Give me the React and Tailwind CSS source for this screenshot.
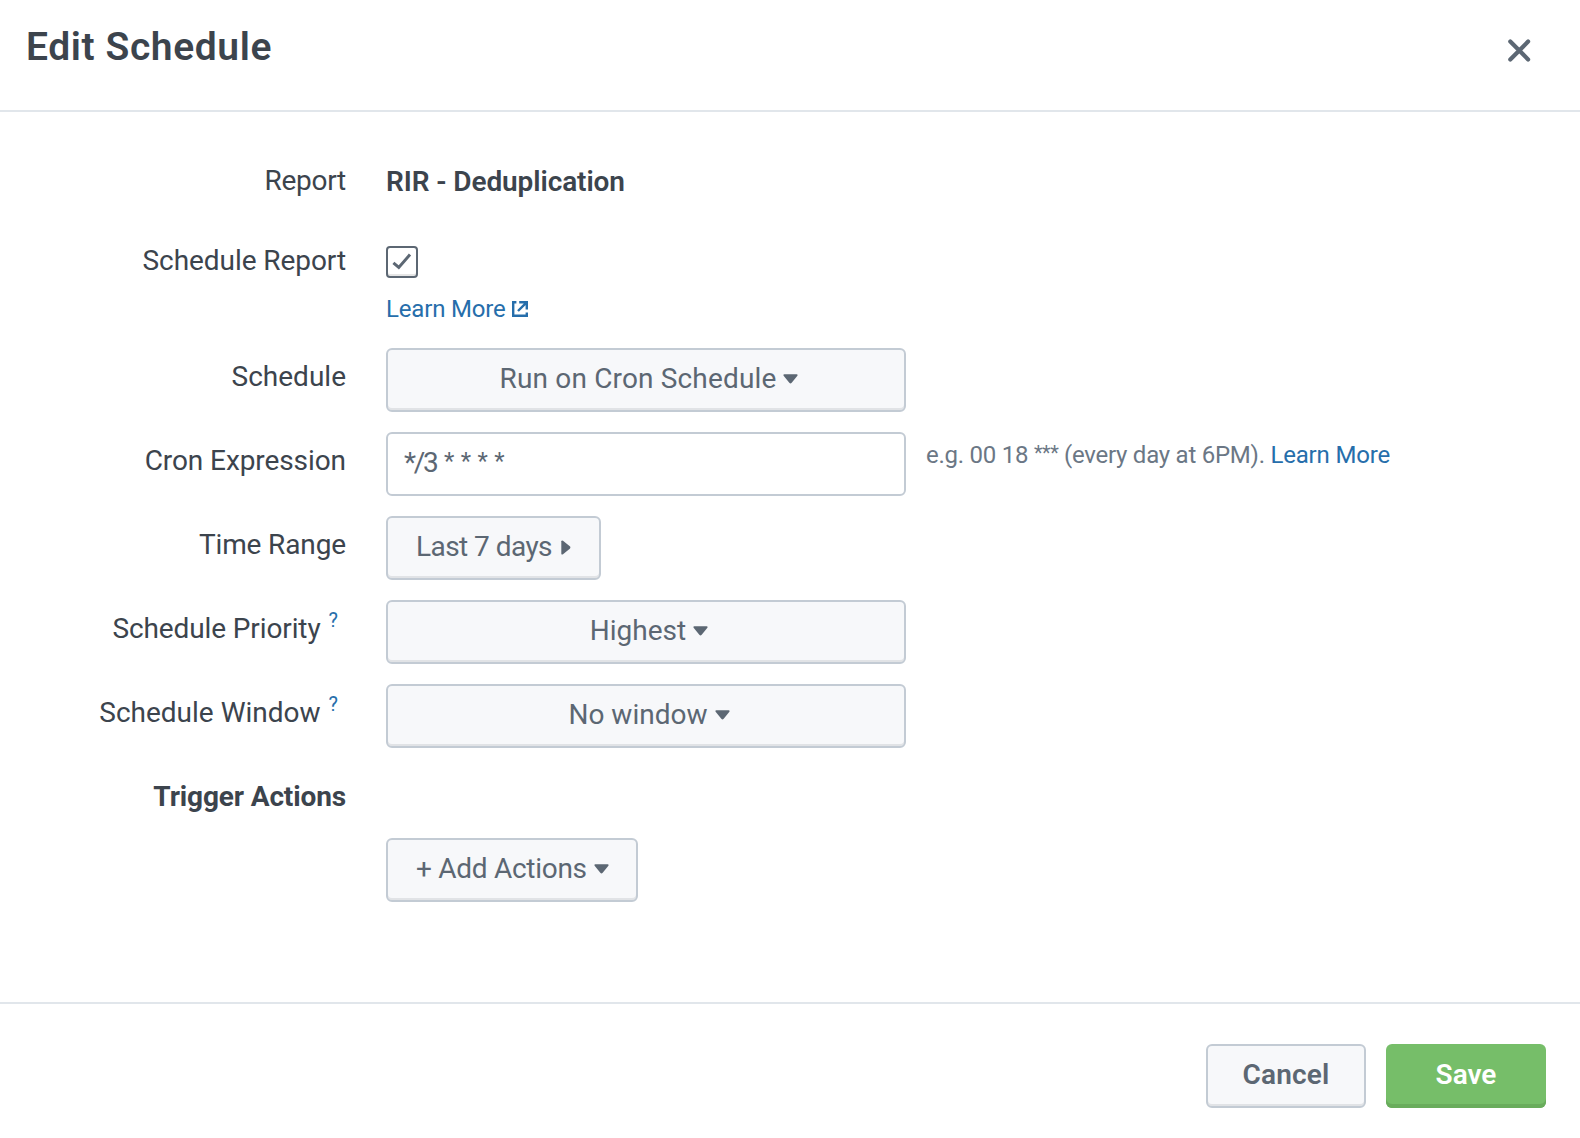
function CaretDown({ className = "" }) {
  return (
    <svg className={`h-[10px] w-[15px] shrink-0 ${className}`} viewBox="0 0 15 10" fill="currentColor">
      <path d="M1.3 .3H13.7Q15.2 .7 14.2 2L8.7 8.8Q7.5 10 6.3 8.8L.8 2Q-.2 .7 1.3 .3Z" />
    </svg>
  );
}

function CaretRight({ className = "" }) {
  return (
    <svg className={`h-[15px] w-[10px] shrink-0 ${className}`} viewBox="0 0 10 15" fill="currentColor">
      <path d="M.3 1.3Q.7 -.2 2 .8L8.8 6.3Q10 7.5 8.8 8.7L2 14.2Q.7 15.2 .3 13.7Z" />
    </svg>
  );
}

function Row({ label, help, height = "h-[84px]", labelClass = "", children }) {
  return (
    <div className={`flex items-start gap-10 ${height}`}>
      <div className="flex w-[346px] shrink-0 justify-end pt-[9px] leading-10 whitespace-nowrap text-[#3c444d]">
        <span className={labelClass}>{label}</span>
        {help && (
          <a className="mr-2 ml-2 -mt-[9px] text-[20px] text-[#266eab]" href="#help">
            ?
          </a>
        )}
      </div>
      {children}
    </div>
  );
}

function Button({ className = "", children }) {
  return (
    <button
      type="button"
      className={`flex h-16 shrink-0 items-center rounded-[6px] border-2 border-[#c3cbd4] bg-[#f7f8fa] pb-[2px] leading-10 whitespace-nowrap text-[#5c6773] shadow-[inset_0_-2px_0_#e1e3e6] ${className}`}
    >
      {children}
    </button>
  );
}

export default function App() {
  return (
    <div className="flex h-[1138px] w-[1580px] flex-col bg-white font-['Roboto',sans-serif] text-[28px] text-[#3c444d]">
      <header className="flex h-28 items-start justify-between border-b-2 border-[#e1e6eb] pt-[19px] pr-[49px] pl-[26px]">
        <h1 className="text-[39px] leading-[56px] font-semibold tracking-[0.6px]">Edit Schedule</h1>
        <button type="button" aria-label="Close" className="mt-[19px] text-[#5c6773]">
          <svg className="h-6 w-6" viewBox="0 0 24 24" fill="none" stroke="currentColor" strokeWidth="4.2" strokeLinecap="round">
            <path d="M3.3 3.6 21.1 21.4M21.1 3.6 3.3 21.4" />
          </svg>
        </button>
      </header>

      <main className="flex-1 pt-10">
        <Row label="Report" height="h-20" labelClass="tracking-[-0.25px]">
          <span className="pt-[10px] leading-10 font-semibold tracking-[-0.09px]">RIR - Deduplication</span>
        </Row>

        <Row label="Schedule Report" height="h-[116px]" labelClass="tracking-[-0.07px]">
          <div className="flex flex-col items-start pt-[14px]">
            <div className="flex h-8 w-8 items-center justify-center rounded-[4px] border-2 border-[#5c6773] bg-white shadow-[inset_0_-2px_0_#e6e6e6]">
              <svg className="h-7 w-7" viewBox="0 0 28 28" fill="none" stroke="#5c6773" strokeWidth="3">
                <path d="M5.4 14.8 10.8 19.4 22 6.6" />
              </svg>
            </div>
            <a className="mt-[15px] flex items-start text-2xl leading-8 tracking-[-0.17px] text-[#266eab]" href="#schedule">
              Learn More
              <svg className="mt-2 ml-[6px] h-4 w-4" viewBox="0 0 16 16" fill="none" stroke="currentColor" strokeWidth="2.4">
                <path d="M4.4 1.2H1.2V14.8H14.8V11.6" />
                <path d="M7.2 1.2H14.8V8.6M14.6 1.4 6 10" />
              </svg>
            </a>
          </div>
        </Row>

        <Row label="Schedule">
          <Button className="w-[520px] justify-center pl-[6px]">
            <span className="tracking-[0.16px]">Run on Cron Schedule</span>
            <CaretDown className="ml-[7px]" />
          </Button>
        </Row>

        <Row label="Cron Expression" labelClass="tracking-[-0.08px]">
          <div className="flex gap-5">
            <div className="flex h-16 w-[520px] items-start rounded-[6px] border-2 border-[#c3cbd4] bg-white pt-[9px] pl-4 leading-10 whitespace-pre text-[#5c6773]">
              <span className="tracking-[-2.3px]">*/3</span>
              <span className="-mt-[2px] pl-px text-2xl leading-10 [word-spacing:0.5px]"> * * * *</span>
            </div>
            <p className="pt-[7px] text-2xl leading-8 tracking-[-0.25px] whitespace-nowrap text-[#6b7785]">
              <span className="tracking-[-0.25px]">e.g. 00 18 </span>
              <span className="align-[3px] text-[20px] leading-none tracking-[-0.5px]">***</span> (every day at 6PM).{" "}
              <a className="tracking-[-0.17px] text-[#266eab]" href="#cron">
                Learn More
              </a>
            </p>
          </div>
        </Row>

        <Row label="Time Range" labelClass="tracking-[-0.13px]">
          <Button className="w-[215px] pl-7">
            <span className="tracking-[-0.55px]">Last 7 days</span>
            <CaretRight className="ml-[9px]" />
          </Button>
        </Row>

        <Row label="Schedule Priority" help labelClass="tracking-[-0.11px]">
          <Button className="w-[520px] justify-center pl-[6px]">
            <span>Highest</span>
            <CaretDown className="ml-[7px]" />
          </Button>
        </Row>

        <Row label="Schedule Window" help>
          <Button className="w-[520px] justify-center pl-[6px]">
            <span>No window</span>
            <CaretDown className="ml-[7px]" />
          </Button>
        </Row>

        <Row label="Trigger Actions" height="h-[70px]" labelClass="font-bold tracking-[-0.13px]" />

        <Row label="">
          <Button className="w-[252px] pl-7">
            <span className="tracking-[-0.28px]">+ Add Actions</span>
            <CaretDown className="ml-[7px]" />
          </Button>
        </Row>
      </main>

      <footer className="flex h-[136px] items-start justify-end gap-5 border-t-2 border-[#e1e6eb] pt-10 pr-[34px] font-semibold">
        <Button className="w-40 justify-center">
          <span className="tracking-[0.2px]">Cancel</span>
        </Button>
        <button
          type="button"
          className="flex h-16 w-40 items-center justify-center rounded-[6px] bg-[#76be69] pb-[2px] leading-10 text-white shadow-[inset_0_-4px_0_#69ac5c]"
        >
          Save
        </button>
      </footer>
    </div>
  );
}
